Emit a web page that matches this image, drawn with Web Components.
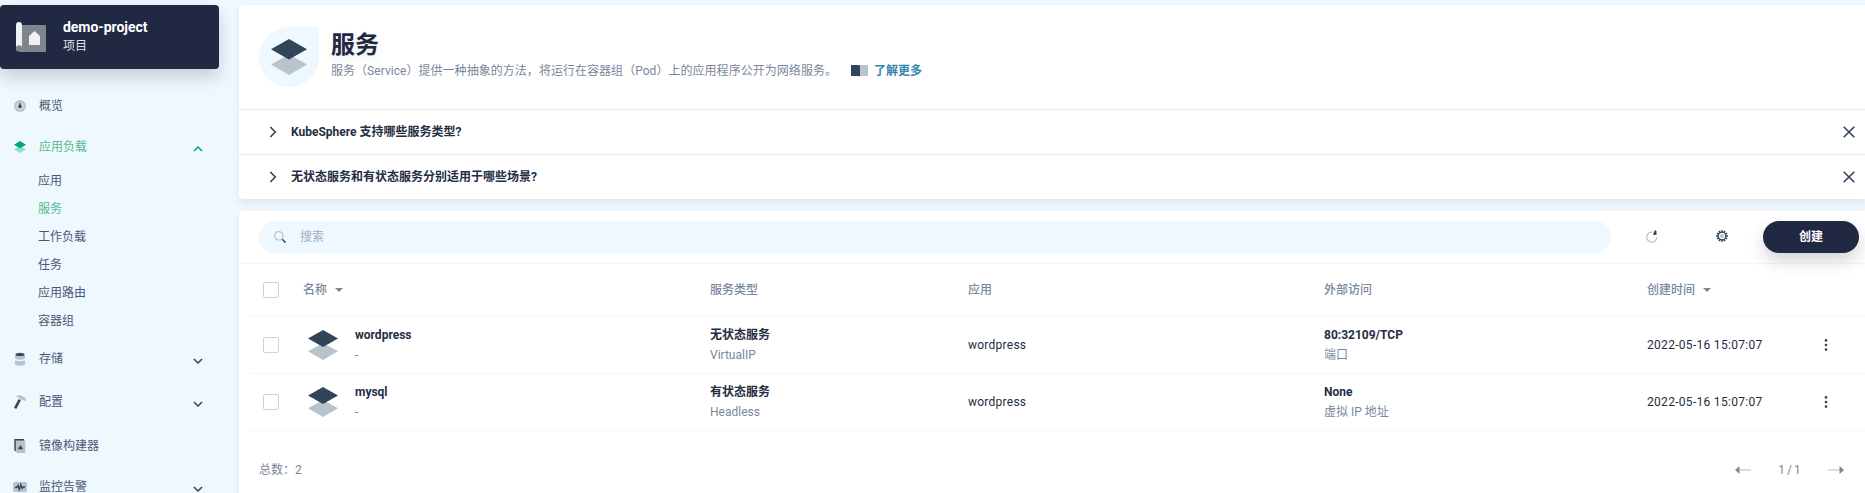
<!DOCTYPE html>
<html lang="zh-CN">
<head>
<meta charset="utf-8">
<title>服务</title>
<style>
html,body{margin:0;height:100%;overflow:hidden}
body{font:12px/20px Roboto,"Noto Sans CJK SC",sans-serif;color:#242e42;background:#eff7ff}
</style>
</head>
<body>
<ks-app></ks-app>
<script>
const define=(name,html,init)=>{
  const t=document.createElement('template');
  t.innerHTML=html;
  customElements.define(name,class extends HTMLElement{
    constructor(){super();this.attachShadow({mode:'open'}).append(t.content.cloneNode(true));}
    connectedCallback(){if(init)init(this,this.shadowRoot);}
  });
};

const D='#324558',L='#b6c4ce';
const teeth=Array.from({length:12},(_,i)=>`<path stroke="${D}" stroke-width="1.400" d="M6 0v2" transform="rotate(${i*30} 6 6)"/>`).join('');
const icons={
  layers:['0 0 36 36',`<path fill="${L}" d="M0 25.6 18 15.500l18 10.100L18 36z"/><path fill="${D}" d="M0 10.300 18 0l18 10.300L18 20.500z"/>`],
  layersGreen:['0 0 12 12','<path fill="#90e0c5" d="M0 8.300 6 5.200l6 3.100L6 12z"/><path fill="#00aa72" d="M0 3.700 6 0l6 3.700L6 7.200z"/>'],
  project:['0 0 30 30','<path fill="#7d868f" d="M6 3h24v27H4z"/><path fill="#f0f1f3" d="M0 3a3 3 0 0 1 6 0v22H0zM13 23v-9l5.500-5 5.500 5v9z"/><circle cx="3" cy="26.500" r="3.200" fill="#7d868f"/>'],
  gauge:['0 0 12 12',`<circle cx="6" cy="6" r="6" fill="${L}"/><circle cx="6" cy="6" r="4.400" fill="#c9d5de"/><path fill="${D}" d="M6 1.800 6.900 5a1.700 1.700 0 1 1-1.800 0z"/>`],
  storage:['0 0 12 14',`<path fill="${L}" d="M1 2.500C1-.3 11-.3 11 2.500V6.300c0 1.800-10 1.800-10 0zM1 8.300c2 1.200 8 1.200 10 0v3.600c0 2.300-10 2.300-10 0z"/><ellipse cx="6" cy="2.400" rx="4.300" ry="1.500" fill="${D}"/>`],
  hammer:['0 0 12 14',`<path fill="${D}" d="m4.600 4 2.300 1.200L2.300 14 0 12.800z"/><path fill="${L}" d="M2 1.700C4-.2 7-.1 8.700 1.300l3.300 2.200-.3 2.300-1.500.3-1.800-1.800-1.400 1.300-2.300-1.200.9-1.500C4.600 2.300 3.500 2 2 1.700z"/>`],
  image:['0 0 12 14',`<path fill="${D}" d="M.3 0H10v2H2v10.500L.3 11.500z"/><path fill="${L}" d="M1.700 1.500H11.300V14H3L1.700 12.500z"/><path fill="${D}" d="m6.500 6 2.700 4.300H3.800z"/>`],
  monitor:['0 0 14 12',`<rect y="1" width="14" height="10" rx="1.500" fill="${L}"/><path fill="none" stroke="${D}" stroke-width="1.300" d="M2 6.500h1.500L5 4.500l1.300 4 1.500-5 1.300 4 1.200-1.500H12"/>`],
  down:['0 0 10 6',`<path fill="none" stroke="${D}" stroke-width="1.500" d="m1 1 4 4 4-4"/>`],
  up:['0 0 10 6','<path fill="none" stroke="#00aa72" stroke-width="1.500" d="m1 5 4-4 4 4"/>'],
  right:['0 0 8 12',`<path fill="none" stroke="${D}" stroke-width="1.600" d="m1.300 1 5 5-5 5"/>`],
  close:['0 0 12 12',`<path fill="none" stroke="${D}" stroke-width="1.600" d="m.7.7 10.600 10.600M11.300.7.7 11.300"/>`],
  book:['0 0 17 12',`<path fill="${L}" d="M9 0h8v11H9z"/><path fill="${D}" d="M0 0h8l1 .7V12l-1-1H0z"/>`],
  search:['0 0 12 12',`<circle cx="4.800" cy="4.800" r="4.200" fill="none" stroke="${L}" stroke-width="1.200"/><path stroke="${D}" stroke-width="1.500" d="m8.200 8.200 3.400 3.400"/>`],
  refresh:['0 0 12 13',`<path fill="none" stroke="${L}" stroke-width="1.300" d="M6.500 2.200A5 5 0 1 0 10.800 7"/><path fill="${D}" d="M8.900 0 10.500 1.200v3.900L7 4.700z"/>`],
  gear:['0 0 12 12',`${teeth}<circle cx="6" cy="6" r="3.900" fill="#fff" stroke="${D}" stroke-width="1.400"/><circle cx="6" cy="6" r="2.100" fill="${L}"/>`],
  caret:['0 0 8 4','<path fill="#79879c" d="M0 0h8L4 4z"/>'],
  more:['0 0 4 12',`<g fill="${D}"><circle cx="2" cy="1.400" r="1.300"/><circle cx="2" cy="6" r="1.300"/><circle cx="2" cy="10.600" r="1.300"/></g>`],
  prev:['0 0 16 8','<path fill="#d8dde3" d="M4 3h12v2H4z"/><path fill="#79879c" d="M0 4 4.500 0v8z"/>'],
  next:['0 0 16 8','<path fill="#d8dde3" d="M0 3h12v2H0z"/><path fill="#79879c" d="m16 4-4.500-4v8z"/>']
};
define('ks-icon','<style>:host{display:block;flex:none}svg{display:block;width:100%;height:100%}</style><svg></svg>',(h,r)=>{
  const i=icons[h.getAttribute('name')],s=r.querySelector('svg'),b=i[0].split(' ');
  s.setAttribute('viewBox',i[0]);s.innerHTML=i[1];
  h.style.width=(h.getAttribute('w')||b[2])+'px';h.style.height=(h.getAttribute('h')||b[3])+'px';
});

define('ks-project-card',`<style>
:host{display:flex;box-sizing:border-box;width:219px;height:64px;padding:0 16px 2px;gap:17px;align-items:center;border-radius:4px;background:#212942;color:#fff;box-shadow:0 8px 16px rgba(36,46,66,.2)}
.name{font-size:14px;font-weight:700;line-height:20px;letter-spacing:-.05px}.kind{color:#dfe3ea;line-height:18px}
ks-icon{margin-top:1px}
</style><ks-icon name="project"></ks-icon><div><div class="name"><slot name="name"></slot></div><div class="kind"><slot></slot></div></div>`);

define('ks-nav-item',`<style>
:host{display:flex;box-sizing:border-box;height:40px;padding:0 16px 0 14px;align-items:center;color:#4a5974}
:host([active]){color:#55bc8a}
.i{display:flex;width:12px;margin-right:13px;justify-content:center}
.t{flex:1}.c{position:relative;top:2px}
</style><span class="i"></span><span class="t"><slot></slot></span><span class="c"></span>`,(h,r)=>{
  r.querySelector('.i').innerHTML='<ks-icon name="'+h.getAttribute('icon')+'"></ks-icon>';
  if(h.hasAttribute('arrow'))r.querySelector('.c').innerHTML='<ks-icon name="'+h.getAttribute('arrow')+'"></ks-icon>';
});
define('ks-nav-sub','<style>:host{display:block;height:28px;line-height:28px;padding-left:38px;color:#4a5974}:host([active]){color:#55bc8a}</style><slot></slot>');

define('ks-sidebar',`<style>
:host{display:block;width:239px;flex:none;padding-top:5px}
nav{padding-top:17px;width:219px}
</style><ks-project-card><span slot="name">demo-project</span>项目</ks-project-card>
<nav>
<ks-nav-item icon="gauge">概览</ks-nav-item>
<ks-nav-item icon="layersGreen" arrow="up" active style="height:41px">应用负载</ks-nav-item>
<ks-nav-sub>应用</ks-nav-sub><ks-nav-sub active>服务</ks-nav-sub><ks-nav-sub>工作负载</ks-nav-sub><ks-nav-sub>任务</ks-nav-sub><ks-nav-sub>应用路由</ks-nav-sub><ks-nav-sub>容器组</ks-nav-sub>
<ks-nav-item icon="storage" arrow="down" style="height:47px">存储</ks-nav-item>
<ks-nav-item icon="hammer" arrow="down">配置</ks-nav-item>
<ks-nav-item icon="image" style="height:47px">镜像构建器</ks-nav-item>
<ks-nav-item icon="monitor" arrow="down" style="height:35px">监控告警</ks-nav-item>
</nav>`);

define('ks-faq',`<style>
:host{display:flex;box-sizing:border-box;height:45px;align-items:center;border-top:1px solid #e3edf0;padding:0 10px 0 30px;font-weight:700}
span{flex:1;margin-left:14px}
</style><ks-icon name="right"></ks-icon><span><slot></slot></span><ks-icon name="close"></ks-icon>`);

define('ks-banner',`<style>
:host{display:block;height:194px;border-radius:4px 0 0 4px;background:#fff;box-shadow:0 4px 8px rgba(36,46,66,.08)}
header{display:flex;height:104px;box-sizing:border-box;padding:22px 20px 0}
.blob{display:grid;place-items:center;width:60px;height:60px;border-radius:30px 0 30px 30px;background:#eff7ff;margin-right:12px}
h1{margin:2px 0 0;font-size:24px;line-height:32px;font-weight:700;color:#212942;text-shadow:0 4px 8px rgba(36,46,66,.1)}
p{display:flex;align-items:center;margin:0;line-height:20px;color:#79879c;white-space:nowrap}
.d{letter-spacing:.04px}
ks-icon.b{margin:0 6px 0 14px}
a{color:#3385b0;font-weight:700}
</style><header><div class="blob"><ks-icon name="layers"></ks-icon></div><div><h1>服务</h1><p><span class="d">服务（Service）提供一种抽象的方法，将运行在容器组（Pod）上的应用程序公开为网络服务。</span><ks-icon class="b" name="book"></ks-icon><a>了解更多</a></p></div></header>
<ks-faq>KubeSphere 支持哪些服务类型?</ks-faq><ks-faq>无状态服务和有状态服务分别适用于哪些场景?</ks-faq>`);

define('ks-toolbar',`<style>
:host{display:flex;box-sizing:border-box;height:53px;padding:0 6px 0 20px;align-items:center;border-bottom:1px solid #eff7ff}
.s{display:flex;align-items:center;width:1352px;box-sizing:border-box;height:32px;border-radius:16px;background:#eff7ff;padding-left:15px;gap:14px;color:#a2adbf}
.r{margin-left:35px;position:relative;top:-1px}.g{margin-left:58px;position:relative;top:-1px}
button{margin:0 0 0 auto;width:96px;height:32px;border:0;border-radius:16px;background:#212942;color:#fff;font:inherit;font-weight:700;box-shadow:0 8px 16px rgba(36,46,66,.2);padding:0}
</style><div class="s"><ks-icon name="search"></ks-icon><span>搜索</span></div><ks-icon class="r" name="refresh"></ks-icon><ks-icon class="g" name="gear"></ks-icon><button>创建</button>`);

define('ks-check','<style>:host{display:block;box-sizing:border-box;width:16px;height:16px;border:1px solid #ccd3db;border-radius:2px;background:#fff}</style>');

const grid='display:grid;align-items:center;box-sizing:border-box;margin-left:11px;padding-left:13px;border-bottom:1px solid #eff7ff;';
define('ks-table-head',`<style>
:host{${grid}grid-template-columns:40px 407px 258px 356px 323px 1fr;height:53px;color:#79879c;font-weight:500}
div{display:flex;align-items:center;gap:8px}
</style><ks-check></ks-check><div>名称<ks-icon name="caret"></ks-icon></div><div>服务类型</div><div>应用</div><div>外部访问</div><div>创建时间<ks-icon name="caret"></ks-icon></div>`);
define('ks-service-row',`<style>
:host{${grid}grid-template-columns:45px 402px 258px 356px 323px 177px 1fr;height:57px}
.n{display:flex;align-items:center;gap:17px}
.b{font-weight:700;line-height:20px;color:#242e42}.m{line-height:20px;color:#79879c}
.app{letter-spacing:.25px}.time{letter-spacing:.3px}
</style><ks-check></ks-check>
<div class="n"><ks-icon name="layers" w="30" h="30"></ks-icon><div><div class="b"><slot name="name"></slot></div><div class="m">-</div></div></div>
<div><div class="b"><slot name="type"></slot></div><div class="m"><slot name="mode"></slot></div></div>
<div class="app"><slot name="app"></slot></div>
<div><div class="b"><slot name="port"></slot></div><div class="m"><slot name="access"></slot></div></div>
<div class="time"><slot name="time"></slot></div><ks-icon name="more"></ks-icon>`);

define('ks-pager',`<style>
:host{display:flex;height:77px;align-items:center;padding:0 21px 0 20px;color:#79879c}
.t{flex:1}.p{width:77px;text-align:center;word-spacing:-1px}
</style><span class="t">总数：2</span><ks-icon name="prev"></ks-icon><span class="p">1 / 1</span><ks-icon name="next"></ks-icon>`);

define('ks-list',`<style>
:host{display:block;flex:1;margin-top:12px;border-radius:4px 0 0 0;background:#fff;box-shadow:0 4px 8px rgba(36,46,66,.08)}
</style><ks-toolbar></ks-toolbar><ks-table-head></ks-table-head>
<ks-service-row><span slot="name">wordpress</span><span slot="type">无状态服务</span><span slot="mode">VirtualIP</span><span slot="app">wordpress</span><span slot="port">80:32109/TCP</span><span slot="access">端口</span><span slot="time">2022-05-16 15:07:07</span></ks-service-row>
<ks-service-row><span slot="name">mysql</span><span slot="type">有状态服务</span><span slot="mode">Headless</span><span slot="app">wordpress</span><span slot="port">None</span><span slot="access">虚拟 IP 地址</span><span slot="time">2022-05-16 15:07:07</span></ks-service-row>
<ks-pager></ks-pager>`);

define('ks-app',`<style>
:host{display:flex;height:493px;overflow:hidden}
main{flex:1;min-width:0;display:flex;flex-direction:column;padding-top:5px}
</style><ks-sidebar></ks-sidebar><main><ks-banner></ks-banner><ks-list></ks-list></main>`);
</script>
</body>
</html>
